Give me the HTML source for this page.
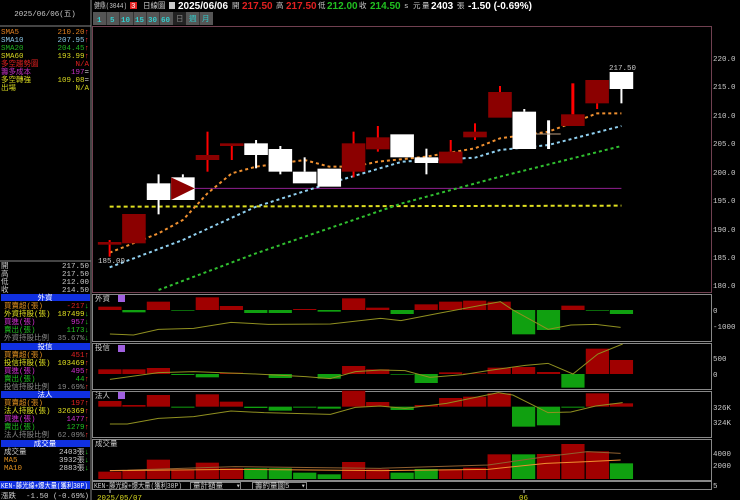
<!DOCTYPE html>
<html><head><meta charset="utf-8"><style>
body{margin:0;background:#000;width:740px;height:500px;overflow:hidden}
svg{display:block}
text{font-family:"Liberation Mono","Noto Sans CJK TC",monospace;font-size:7.5px}
.h{font-family:"Liberation Sans","Noto Sans CJK TC",sans-serif;font-size:10px;font-weight:bold}
</style></head><body>
<svg width="740" height="500" viewBox="0 0 740 500" xmlns="http://www.w3.org/2000/svg">
<rect width="740" height="500" fill="#000"/>
<!-- left panel -->
<line x1="91" y1="0" x2="91" y2="500" stroke="#888" stroke-width="1"/>
<line x1="0" y1="26" x2="91" y2="26" stroke="#888"/>
<text x="45" y="16" fill="#ccc" text-anchor="middle">2025/06/06(五)</text>
<g>
<text x="1" y="34" fill="#e08020">SMA5</text><text x="89" y="34" fill="#e08020" text-anchor="end">210.20<tspan fill="#f33">↑</tspan></text>
<text x="1" y="42" fill="#8cc8e8">SMA10</text><text x="89" y="42" fill="#8cc8e8" text-anchor="end">207.95<tspan fill="#f33">↑</tspan></text>
<text x="1" y="50" fill="#20b020">SMA20</text><text x="89" y="50" fill="#20b020" text-anchor="end">204.45<tspan fill="#f33">↑</tspan></text>
<text x="1" y="58" fill="#d8d820">SMA60</text><text x="89" y="58" fill="#d8d820" text-anchor="end">193.99<tspan fill="#f33">↑</tspan></text>
<text x="1" y="66" fill="#e02020">多空趨勢圖</text><text x="89" y="66" fill="#e02020" text-anchor="end">N/A</text>
<text x="1" y="74" fill="#c030c0">籌多成本</text><text x="89" y="74" fill="#c030c0" text-anchor="end">197<tspan fill="#ccc">=</tspan></text>
<text x="1" y="82" fill="#d8d820">多空轉強</text><text x="89" y="82" fill="#d8d820" text-anchor="end">109.08<tspan fill="#ccc">=</tspan></text>
<text x="1" y="90" fill="#d8d820">出場</text><text x="89" y="90" fill="#d8d820" text-anchor="end">N/A</text>
</g>
<line x1="0" y1="261" x2="91" y2="261" stroke="#888"/>
<g fill="#ccc">
<text x="1" y="268">開</text><text x="89" y="268" text-anchor="end">217.50</text>
<text x="1" y="276">高</text><text x="89" y="276" text-anchor="end">217.50</text>
<text x="1" y="284">低</text><text x="89" y="284" text-anchor="end">212.00</text>
<text x="1" y="292">收</text><text x="89" y="292" text-anchor="end">214.50</text>
</g>
<g font-size="7">
<rect x="1" y="294" width="89" height="7" fill="#1030e0"/><text x="45" y="300" fill="#fff" text-anchor="middle">外資</text>
<text x="4" y="308" fill="#e09020">買賣超(張)</text><text x="89" y="308" fill="#e02020" text-anchor="end">-217<tspan fill="#2c2">↓</tspan></text>
<text x="4" y="316" fill="#e0e020">外資持股(張)</text><text x="89" y="316" fill="#e0e020" text-anchor="end">187499<tspan fill="#2c2">↓</tspan></text>
<text x="4" y="324" fill="#d030d0">買進(張)</text><text x="89" y="324" fill="#d030d0" text-anchor="end">957<tspan fill="#2c2">↓</tspan></text>
<text x="4" y="332" fill="#20c020">賣出(張)</text><text x="89" y="332" fill="#20c020" text-anchor="end">1173<tspan fill="#2c2">↓</tspan></text>
<text x="4" y="340" fill="#888">外資持股比例</text><text x="89" y="340" fill="#888" text-anchor="end">35.67%<tspan fill="#2c2">↓</tspan></text>
<rect x="1" y="343" width="89" height="7" fill="#1030e0"/><text x="45" y="349" fill="#fff" text-anchor="middle">投信</text>
<text x="4" y="357" fill="#e09020">買賣超(張)</text><text x="89" y="357" fill="#e02020" text-anchor="end">451<tspan fill="#f33">↑</tspan></text>
<text x="4" y="365" fill="#e0e020">投信持股(張)</text><text x="89" y="365" fill="#e0e020" text-anchor="end">103469<tspan fill="#f33">↑</tspan></text>
<text x="4" y="373" fill="#d030d0">買進(張)</text><text x="89" y="373" fill="#d030d0" text-anchor="end">495<tspan fill="#f33">↑</tspan></text>
<text x="4" y="381" fill="#20c020">賣出(張)</text><text x="89" y="381" fill="#20c020" text-anchor="end">44<tspan fill="#f33">↑</tspan></text>
<text x="4" y="389" fill="#888">投信持股比例</text><text x="89" y="389" fill="#888" text-anchor="end">19.69%<tspan fill="#f33">↑</tspan></text>
<rect x="1" y="391" width="89" height="7" fill="#1030e0"/><text x="45" y="397" fill="#fff" text-anchor="middle">法人</text>
<text x="4" y="405" fill="#e09020">買賣超(張)</text><text x="89" y="405" fill="#e02020" text-anchor="end">197<tspan fill="#f33">↑</tspan></text>
<text x="4" y="413" fill="#e0e020">法人持股(張)</text><text x="89" y="413" fill="#e0e020" text-anchor="end">326369<tspan fill="#f33">↑</tspan></text>
<text x="4" y="421" fill="#d030d0">買進(張)</text><text x="89" y="421" fill="#d030d0" text-anchor="end">1477<tspan fill="#f33">↑</tspan></text>
<text x="4" y="429" fill="#20c020">賣出(張)</text><text x="89" y="429" fill="#20c020" text-anchor="end">1279<tspan fill="#f33">↑</tspan></text>
<text x="4" y="437" fill="#888">法人持股比例</text><text x="89" y="437" fill="#888" text-anchor="end">62.09%<tspan fill="#f33">↑</tspan></text>
<rect x="1" y="440" width="89" height="7" fill="#1030e0"/><text x="45" y="446" fill="#fff" text-anchor="middle">成交量</text>
<text x="4" y="454" fill="#ccc">成交量</text><text x="89" y="454" fill="#ccc" text-anchor="end">2403張<tspan fill="#2c2">↓</tspan></text>
<text x="4" y="462" fill="#e09020">MA5</text><text x="89" y="462" fill="#ccc" text-anchor="end">3932張<tspan fill="#2c2">↓</tspan></text>
<text x="4" y="470" fill="#e09020">MA10</text><text x="89" y="470" fill="#ccc" text-anchor="end">2883張<tspan fill="#2c2">↓</tspan></text>
</g>
<rect x="0" y="481" width="90" height="8" fill="#1030e0"/><text x="1" y="488" fill="#fff" font-size="7" textLength="87" lengthAdjust="spacingAndGlyphs">KEN-藤光線+爆大量(獲利30P)</text>
<text x="1" y="498" fill="#ccc">漲跌</text><text x="89" y="498" fill="#ccc" text-anchor="end">-1.50 (-0.69%)</text>

<!-- header -->
<text x="94" y="8" fill="#ccc" font-size="7" textLength="33" lengthAdjust="spacingAndGlyphs">健鼎(3044)</text>
<rect x="130" y="2" width="7" height="7" fill="#e02020"/><text x="131" y="8" fill="#fff" font-size="6">3</text>
<text x="143" y="8" fill="#ccc" font-size="7">日線圖</text>
<rect x="169" y="2" width="6" height="7" fill="#ccc"/>
<text x="178" y="9" class="h" fill="#fff">2025/06/06</text>
<text x="232" y="8" fill="#ccc" font-size="7">開</text><text x="242" y="9" class="h" fill="#e02020">217.50</text>
<text x="276" y="8" fill="#ccc" font-size="7">高</text><text x="286" y="9" class="h" fill="#e02020">217.50</text>
<text x="318" y="8" fill="#ccc" font-size="7">低</text><text x="327" y="9" class="h" fill="#20c020">212.00</text>
<text x="359" y="8" fill="#ccc" font-size="7">收</text><text x="370" y="9" class="h" fill="#20c020">214.50</text>
<text x="404" y="8" fill="#ccc" font-size="7">s 元</text><text x="422" y="8" fill="#ccc" font-size="7">量</text>
<text x="431" y="9" class="h" fill="#fff">2403</text><text x="457" y="8" fill="#ccc" font-size="7">張</text>
<text x="468" y="9" class="h" fill="#fff">-1.50 (-0.69%)</text>
<g font-size="9" font-weight="bold">
<rect x="93" y="12" width="80" height="13" fill="#555"/>
<rect x="186" y="12" width="27" height="13" fill="#555"/>
<g stroke="#333"><line x1="106.5" y1="12" x2="106.5" y2="25"/><line x1="119.5" y1="12" x2="119.5" y2="25"/><line x1="133.5" y1="12" x2="133.5" y2="25"/><line x1="146.5" y1="12" x2="146.5" y2="25"/><line x1="159.5" y1="12" x2="159.5" y2="25"/><line x1="199.5" y1="12" x2="199.5" y2="25"/></g>
<text x="97" y="22" fill="#3cc">1</text><text x="110" y="22" fill="#3cc">5</text><text x="121" y="22" fill="#3cc">10</text><text x="135" y="22" fill="#3cc">15</text><text x="148" y="22" fill="#3cc">30</text><text x="161" y="22" fill="#3cc">60</text>
<rect x="173" y="12" width="13" height="13" fill="#222"/><text x="176" y="21" fill="#888" font-size="7" font-weight="normal">日</text>
<text x="189" y="21" fill="#3cc" font-size="7" font-weight="normal">週</text><text x="202" y="21" fill="#3cc" font-size="7" font-weight="normal">月</text>
</g>

<!-- frames -->
<g stroke="#704050" fill="none" stroke-width="1">
<rect x="92.5" y="26.5" width="619" height="266"/>
</g>
<g stroke="#888" fill="none">
<rect x="92.5" y="294.5" width="619" height="47"/>
<rect x="92.5" y="343.5" width="619" height="46"/>
<rect x="92.5" y="391.5" width="619" height="46"/>
<rect x="92.5" y="439.5" width="619" height="41"/>
<rect x="92.5" y="481.5" width="619" height="8"/>
</g>
<g fill="#ccc" font-size="8">
<text x="713" y="61">220.0</text><text x="713" y="89">215.0</text><text x="713" y="118">210.0</text><text x="713" y="146">205.0</text><text x="713" y="175">200.0</text><text x="713" y="203">195.0</text><text x="713" y="232">190.0</text><text x="713" y="260">185.0</text><text x="713" y="288">180.0</text>
<text x="713" y="313">0</text><text x="713" y="329">-1000</text>
<text x="713" y="361">500</text><text x="713" y="377">0</text>
<text x="713" y="410">326K</text><text x="713" y="425">324K</text>
<text x="713" y="456">4000</text><text x="713" y="468">2000</text>
<text x="713" y="488">5</text>
</g>

<!-- main chart in zoom coords -->
<g transform="translate(90,60) scale(0.35714,0.33333)">
<g fill="none">
<polyline vector-effect="non-scaling-stroke" points="55,440 1488,437" stroke="#e0e020" stroke-width="2" stroke-dasharray="4 3"/>
<polyline vector-effect="non-scaling-stroke" points="290,385 1488,385" stroke="#902090" stroke-width="1"/>
<polyline vector-effect="non-scaling-stroke" points="192,690 465,580 874,430 1148,350 1488,258" stroke="#30c030" stroke-width="2" stroke-dasharray="3 3"/>
<polyline vector-effect="non-scaling-stroke" points="55,622 260,540 465,440 670,370 874,305 1078,293 1148,270 1284,255 1488,198" stroke="#90d0f0" stroke-width="2" stroke-dasharray="3 3"/>
<polyline vector-effect="non-scaling-stroke" points="55,578 192,520 260,480 329,400 397,340 465,320 601,300 670,320 738,320 806,305 942,290 1078,265 1148,235 1284,215 1420,160 1488,160" stroke="#f09030" stroke-width="2" stroke-dasharray="3 3"/>
</g>
<g stroke-width="2">
<g stroke="#f00">
<line vector-effect="non-scaling-stroke" x1="55" y1="540" x2="55" y2="590"/>
<line vector-effect="non-scaling-stroke" x1="329" y1="215" x2="329" y2="335"/>
<line vector-effect="non-scaling-stroke" x1="397" y1="258" x2="397" y2="300"/>
<line vector-effect="non-scaling-stroke" x1="738" y1="215" x2="738" y2="352"/>
<line vector-effect="non-scaling-stroke" x1="806" y1="198" x2="806" y2="275"/>
<line vector-effect="non-scaling-stroke" x1="1010" y1="240" x2="1010" y2="275"/>
<line vector-effect="non-scaling-stroke" x1="1078" y1="190" x2="1078" y2="240"/>
<line vector-effect="non-scaling-stroke" x1="1148" y1="78" x2="1148" y2="96"/>
<line vector-effect="non-scaling-stroke" x1="1352" y1="70" x2="1352" y2="163" stroke-width="3"/>
<line vector-effect="non-scaling-stroke" x1="1420" y1="130" x2="1420" y2="147"/>
</g>
<g stroke="#fff">
<line vector-effect="non-scaling-stroke" x1="192" y1="343" x2="192" y2="463"/>
<line vector-effect="non-scaling-stroke" x1="260" y1="343" x2="260" y2="352"/>
<line vector-effect="non-scaling-stroke" x1="465" y1="240" x2="465" y2="325"/>
<line vector-effect="non-scaling-stroke" x1="533" y1="258" x2="533" y2="343"/>
<line vector-effect="non-scaling-stroke" x1="601" y1="292" x2="601" y2="335"/>
<line vector-effect="non-scaling-stroke" x1="942" y1="266" x2="942" y2="343"/>
<line vector-effect="non-scaling-stroke" x1="1216" y1="147" x2="1216" y2="155"/>
<line vector-effect="non-scaling-stroke" x1="1284" y1="181" x2="1284" y2="267" stroke-width="3"/>
<line vector-effect="non-scaling-stroke" x1="1488" y1="87" x2="1488" y2="130"/>
</g>
<line vector-effect="non-scaling-stroke" x1="1250" y1="222" x2="1318" y2="222" stroke="#c0a080" stroke-width="1"/>
</g>
<g fill="#8b0000">
<rect x="22" y="546" width="66" height="8"/>
<rect x="90" y="462" width="66" height="88"/>
<rect x="296" y="285" width="66" height="15"/>
<rect x="364" y="250" width="66" height="8"/>
<rect x="705" y="250" width="66" height="85"/>
<rect x="773" y="232" width="66" height="36"/>
<rect x="977" y="275" width="66" height="35"/>
<rect x="1045" y="215" width="66" height="17"/>
<rect x="1115" y="96" width="66" height="77"/>
<rect x="1319" y="163" width="66" height="35"/>
<rect x="1387" y="60" width="66" height="70"/>
</g>
<g fill="#fff">
<rect x="159" y="370" width="66" height="50"/>
<rect x="227" y="352" width="66" height="68"/>
<rect x="432" y="250" width="66" height="35"/>
<rect x="500" y="267" width="66" height="68"/>
<rect x="568" y="335" width="66" height="35"/>
<rect x="637" y="326" width="66" height="54"/>
<rect x="841" y="223" width="66" height="69"/>
<rect x="909" y="292" width="66" height="17"/>
<rect x="1183" y="155" width="66" height="112"/>
<rect x="1455" y="36" width="66" height="51"/>
</g>
<polygon points="227,352 227,420 293,385" fill="#8b0000"/>
</g>
<text x="98" y="263" fill="#ccc" font-size="8">185.00</text>
<text x="609" y="70" fill="#ccc" font-size="8">217.50</text>

<!-- lower panels -->
<g font-size="7" fill="#ccc">
<text x="95" y="301">外資</text><text x="95" y="350">投信</text><text x="95" y="398">法人</text><text x="95" y="446">成交量</text>
</g>
<g fill="#a060e0"><rect x="118" y="295" width="7" height="7"/><rect x="118" y="345" width="7" height="7"/><rect x="118" y="392" width="7" height="7"/></g>
<g transform="translate(90,280) scale(0.41454,0.33333)">
<g fill="#a00000">
<rect x="20" y="80" width="56" height="10"/><rect x="137" y="65" width="56" height="25"/><rect x="255" y="52" width="56" height="38"/><rect x="313" y="78" width="56" height="12"/><rect x="490" y="87" width="56" height="3"/><rect x="608" y="55" width="56" height="35"/><rect x="666" y="83" width="56" height="7"/><rect x="783" y="73" width="56" height="17"/><rect x="842" y="65" width="56" height="25"/><rect x="900" y="62" width="56" height="28"/><rect x="959" y="65" width="56" height="25"/><rect x="1137" y="77" width="56" height="13"/>
</g>
<g fill="#10a010">
<rect x="78" y="90" width="56" height="7"/><rect x="196" y="90" width="56" height="2"/><rect x="372" y="90" width="56" height="9"/><rect x="431" y="90" width="56" height="9"/><rect x="549" y="90" width="56" height="5"/><rect x="725" y="90" width="56" height="12"/><rect x="1018" y="90" width="56" height="73"/><rect x="1078" y="90" width="56" height="60"/><rect x="1196" y="90" width="56" height="2"/><rect x="1254" y="90" width="56" height="12"/>
</g>
<polyline vector-effect="non-scaling-stroke" fill="none" stroke="#909020" stroke-width="1" points="48,162 105,165 165,148 250,145 340,127 430,133 580,132 700,115 750,122 840,100 990,65 1020,90 1105,148 1160,135 1220,133 1280,142"/>
<g fill="#a00000">
<rect x="20" y="268" width="56" height="14"/><rect x="78" y="268" width="56" height="14"/><rect x="137" y="264" width="56" height="18"/><rect x="313" y="278" width="56" height="4"/><rect x="608" y="258" width="56" height="24"/><rect x="666" y="268" width="56" height="14"/><rect x="842" y="277" width="56" height="5"/><rect x="900" y="280" width="56" height="2"/><rect x="959" y="263" width="56" height="19"/><rect x="1018" y="261" width="56" height="21"/><rect x="1078" y="276" width="56" height="6"/><rect x="1196" y="206" width="56" height="76"/><rect x="1254" y="240" width="56" height="42"/>
</g>
<g fill="#10a010">
<rect x="196" y="282" width="56" height="3"/><rect x="255" y="282" width="56" height="10"/><rect x="431" y="282" width="56" height="12"/><rect x="549" y="282" width="56" height="14"/><rect x="725" y="282" width="56" height="2"/><rect x="783" y="282" width="56" height="27"/><rect x="1137" y="282" width="56" height="41"/>
</g>
<polyline vector-effect="non-scaling-stroke" fill="none" stroke="#909020" stroke-width="1" points="48,298 165,278 250,275 400,282 520,290 580,296 640,275 700,270 760,272 820,292 900,284 960,272 1050,256 1105,250 1165,282 1225,222 1285,192"/>
<g fill="#a00000">
<rect x="20" y="363" width="56" height="17"/><rect x="78" y="375" width="56" height="5"/><rect x="137" y="345" width="56" height="35"/><rect x="255" y="343" width="56" height="37"/><rect x="313" y="365" width="56" height="15"/><rect x="608" y="332" width="56" height="48"/><rect x="666" y="366" width="56" height="14"/><rect x="783" y="375" width="56" height="5"/><rect x="842" y="354" width="56" height="26"/><rect x="900" y="350" width="56" height="30"/><rect x="959" y="340" width="56" height="40"/><rect x="1196" y="340" width="56" height="40"/><rect x="1254" y="370" width="56" height="10"/>
</g>
<g fill="#10a010">
<rect x="196" y="380" width="56" height="3"/><rect x="372" y="380" width="56" height="4"/><rect x="431" y="380" width="56" height="12"/><rect x="490" y="380" width="56" height="3"/><rect x="549" y="380" width="56" height="6"/><rect x="725" y="380" width="56" height="10"/><rect x="1018" y="380" width="56" height="60"/><rect x="1078" y="380" width="56" height="56"/><rect x="1137" y="380" width="56" height="3"/>
</g>
<polyline vector-effect="non-scaling-stroke" fill="none" stroke="#909020" stroke-width="1" points="48,432 90,432 165,415 250,410 340,393 420,398 580,403 640,382 700,378 760,385 860,370 985,338 1020,345 1105,398 1160,396 1220,378 1285,368"/>
<g fill="#a00000">
<rect x="20" y="575" width="56" height="22"/><rect x="78" y="572" width="56" height="25"/><rect x="137" y="539" width="56" height="58"/><rect x="196" y="568" width="56" height="29"/><rect x="255" y="548" width="56" height="49"/><rect x="313" y="565" width="56" height="32"/><rect x="608" y="546" width="56" height="51"/><rect x="666" y="568" width="56" height="29"/><rect x="842" y="568" width="56" height="29"/><rect x="900" y="563" width="56" height="34"/><rect x="959" y="523" width="56" height="74"/><rect x="1078" y="522" width="56" height="75"/><rect x="1137" y="492" width="56" height="105"/><rect x="1196" y="514" width="56" height="83"/>
</g>
<g fill="#10a010">
<rect x="372" y="565" width="56" height="32"/><rect x="431" y="565" width="56" height="32"/><rect x="490" y="578" width="56" height="19"/><rect x="549" y="583" width="56" height="14"/><rect x="725" y="578" width="56" height="19"/><rect x="783" y="567" width="56" height="30"/><rect x="1018" y="523" width="56" height="74"/><rect x="1254" y="550" width="56" height="47"/>
</g>
<polyline vector-effect="non-scaling-stroke" fill="none" stroke="#906030" stroke-width="1" points="48,572 350,560 700,565 960,555 1100,530 1200,515 1280,520"/>
<polyline vector-effect="non-scaling-stroke" fill="none" stroke="#f09030" stroke-width="1" points="48,572 350,568 700,572 960,568 1100,550 1200,545 1280,540"/>
</g>
<!-- bottom bar -->
<text x="94" y="488" fill="#ccc" font-size="7" textLength="88" lengthAdjust="spacingAndGlyphs">KEN-藤光線+爆大量(獲利30P)</text>
<rect x="190.5" y="482.5" width="50" height="7" fill="#000" stroke="#888"/><text x="193" y="488" fill="#ccc" font-size="6.5">量計額量</text><text x="236" y="488" fill="#ccc" font-size="6">▾</text>
<rect x="252.5" y="482.5" width="54" height="7" fill="#000" stroke="#888"/><text x="255" y="488" fill="#ccc" font-size="6.5">籌約量圖5</text><text x="301" y="488" fill="#ccc" font-size="6">▾</text>
<line x1="110" y1="490" x2="110" y2="493" stroke="#ccc"/>
<text x="97" y="500" fill="#d8d820" font-size="8">2025/05/07</text>
<line x1="524" y1="490" x2="524" y2="493" stroke="#ccc"/>
<text x="519" y="500" fill="#d8d820" font-size="8">06</text>
</svg>
</body></html>
